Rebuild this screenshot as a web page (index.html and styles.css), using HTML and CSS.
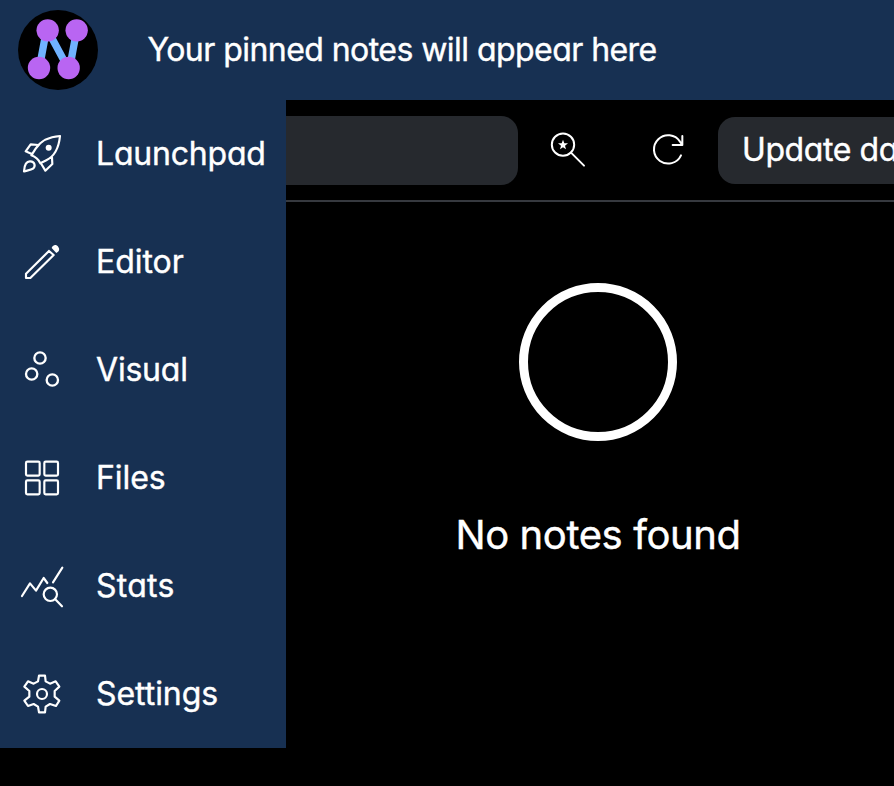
FILE: index.html
```
<!DOCTYPE html>
<html lang="en">
<head>
<meta charset="utf-8">
<title>Notes</title>
<link rel="stylesheet" href="styles.css">
</head>
<body>
<header class="topbar">
  <svg class="logo" viewBox="0 0 240 240">
    <circle cx="120" cy="120" r="120" fill="#000"/>
    <path d="M85 61L64 174M89 61L150 174M176 61L155 174" stroke="#70b2ff" stroke-width="22" fill="none"/>
    <g fill="#b965f2"><circle cx="89" cy="61" r="33.5"/><circle cx="176" cy="61" r="33.5"/><circle cx="63" cy="174" r="33.5"/><circle cx="152" cy="174" r="33.5"/></g>
  </svg>
  <p class="pinned">Your pinned notes will appear here</p>
</header>
<div class="body">
  <nav class="sidebar">
    <a class="item"><svg class="icon" viewBox="0 -3 210 210"><path d="M150 48C120 50 93 61 77 86L64 106C75 110 86 119 91 130L109 121C137 107 147 79 150 48ZM85 75L62 73L47 94L67 103M126 112L127 132L106 152L94 132M42 154C43 133 50 123 61 124C74 125 78 138 69 146C64 150 54 151 42 154Z"/><circle class="solid" cx="116" cy="83" r="9"/></svg><span class="label">Launchpad</span></a>
    <a class="item"><svg class="icon" viewBox="0 -9 210 210"><path d="M117 63L48 131V144H61L131 75M117 63L131 75"/><path class="solid" d="M125 54C130 43 139 43 145 51C150 58 148 65 139 69Z"/></svg><span class="label wide">Editor</span></a>
    <a class="item"><svg class="icon bold" viewBox="0 0 210 210"><circle cx="90" cy="69" r="17"/><circle cx="65" cy="117" r="17"/><circle cx="127" cy="135" r="17"/></svg><span class="label">Visual</span></a>
    <a class="item"><svg class="icon" viewBox="0 -6 210 210"><rect x="48" y="50" width="41" height="42" rx="4"/><rect x="103" y="50" width="41" height="42" rx="4"/><rect x="48" y="106" width="41" height="42" rx="4"/><rect x="103" y="106" width="41" height="42" rx="4"/></svg><span class="label wide">Files</span></a>
    <a class="item"><svg class="icon" viewBox="0 3 210 210"><path d="M36 138L60 100L78 122L101 84L112 99M129 97L157 53M135 147L156 169"/><circle cx="121" cy="133" r="20"/></svg><span class="label wider">Stats</span></a>
    <a class="item"><svg class="icon" viewBox="0 -3 210 210"><path d="M87 47H105L107 64L120 71L137 64L148 80L134 93V110L148 122L138 138L120 132L107 140L105 157H87L84 140L71 132L54 138L43 122L58 110V93L43 80L54 64L71 71L84 64Z"/><circle cx="96" cy="102" r="15"/></svg><span class="label wide">Settings</span></a>
  </nav>
  <main class="main">
    <div class="toolbar">
      <div class="search"></div>
      <svg class="tool" viewBox="0 0 300 204">
        <circle cx="135" cy="86" r="33.5"/><path d="M159 110L198 149"/>
        <path class="solid" d="M135 71L139 82L150 82L141 89L144 100L135 94L126 100L129 89L120 82L131 82Z"/>
      </svg>
      <svg class="tool" viewBox="0 0 300 204">
        <path d="M189 118A42.500 42.500 0 1 1 186 77L193 87M193 60V87H164"/>
      </svg>
      <button class="update">Update database</button>
    </div>
    <section class="empty">
      <div class="ring"></div>
      <h1>No notes found</h1>
    </section>
  </main>
</div>
</body>
</html>
```
FILE: styles.css
```
* { box-sizing: border-box; }
body { margin: 0; height: 786px; overflow: hidden; background: #000; color: #fff; font-family: Inter, sans-serif; font-feature-settings: "cv11"; font-size: 32px; line-height: 40px; white-space: nowrap; -webkit-text-stroke: 0.4px #fff; }
p, h1 { margin: 0; font-weight: 400; }
.topbar { height: 100px; padding-left: 18px; display: flex; align-items: center; gap: 49.500px; background: #173052; }
.logo { width: 80px; height: 80px; }
.pinned { letter-spacing: -0.55px; }
.body { display: flex; }
.sidebar { width: 286px; height: 648px; flex: none; background: #173052; }
.item { height: 108px; padding-left: 10px; display: flex; align-items: center; gap: 16px; }
.icon { width: 70px; height: 70px; flex: none; fill: none; stroke: #fff; stroke-width: 6.500; stroke-linecap: round; stroke-linejoin: round; }
.bold { stroke-width: 7; }
.label { letter-spacing: -0.2px; }
.wide { letter-spacing: -0.05px; }
.wider { letter-spacing: 0.25px; }
.solid { fill: #fff; stroke: none; }
.main { width: 608px; flex: none; overflow: hidden; }
.toolbar { height: 102px; display: flex; align-items: center; border-bottom: 2px solid #36393f; }
.search { width: 232px; height: 69px; flex: none; border-radius: 0 17px 17px 0; background: #26292e; }
.tool { width: 100px; height: 68px; flex: none; fill: none; stroke: #fff; stroke-width: 6; stroke-linecap: round; stroke-linejoin: round; }
.update { width: 350px; height: 67px; flex: none; padding: 0 24px; border: 0; border-radius: 17px; background: #26292e; color: inherit; font: inherit; font-feature-settings: inherit; letter-spacing: -0.4px; text-align: left; }
.empty { display: flex; flex-direction: column; align-items: center; padding: 81px 0 0 16px; gap: 69px; }
.ring { width: 158px; height: 158px; border: 9.500px solid #fff; border-radius: 50%; }
h1 { font-size: 40px; line-height: 50px; letter-spacing: -0.4px; }
```
